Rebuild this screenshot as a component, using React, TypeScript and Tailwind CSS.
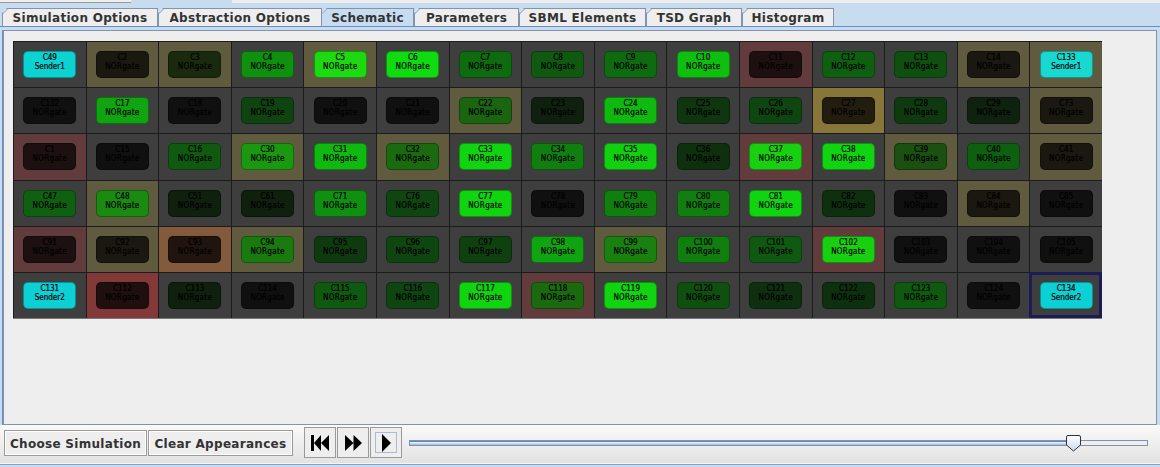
const font = "font-['DejaVu_Sans',sans-serif]";

const GREY = "bg-[#3e3e3e]";
const OLIVE = "bg-[#605a3e]";
const ROSE = "bg-[#623c3c]";
const GOLD = "bg-[#877539]";
const ORANGE = "bg-[#835a3b]";
const RED = "bg-[#843939]";

type Cell = [string, string, string, string?, string?];

const rows: Cell[][] = [
  [
    ["C49", "bg-[#0dd2d2]", GREY, "Sender1"],
    ["C2", "bg-[#1b1810]", OLIVE],
    ["C3", "bg-[#1a2a0e]", OLIVE],
    ["C4", "bg-[#10900f]", GREY],
    ["C5", "bg-[#1cd911]", OLIVE],
    ["C6", "bg-[#10da10]", GREY],
    ["C7", "bg-[#0f6b10]", GREY],
    ["C8", "bg-[#0f5a10]", GREY],
    ["C9", "bg-[#0f6b10]", GREY],
    ["C10", "bg-[#0fbf10]", GREY],
    ["C11", "bg-[#1e1010]", ROSE],
    ["C12", "bg-[#0f5f10]", GREY],
    ["C13", "bg-[#0f4f10]", GREY],
    ["C14", "bg-[#1a1810]", OLIVE],
    ["C133", "bg-[#18d8d0]", OLIVE, "Sender1"],
  ],
  [
    ["C132", "bg-[#101010]", GREY],
    ["C17", "bg-[#10a410]", GREY],
    ["C18", "bg-[#101010]", GREY],
    ["C19", "bg-[#0f4310]", GREY],
    ["C20", "bg-[#101010]", GREY],
    ["C21", "bg-[#101010]", GREY],
    ["C22", "bg-[#1b6410]", OLIVE],
    ["C23", "bg-[#0f200f]", GREY],
    ["C24", "bg-[#10b910]", GREY],
    ["C25", "bg-[#0f360f]", GREY],
    ["C26", "bg-[#0f4510]", GREY],
    ["C27", "bg-[#231d10]", GOLD],
    ["C28", "bg-[#0f3a10]", GREY],
    ["C29", "bg-[#0f220f]", GREY],
    ["C73", "bg-[#1a1810]", OLIVE],
  ],
  [
    ["C1", "bg-[#1c1010]", ROSE],
    ["C15", "bg-[#101010]", GREY],
    ["C16", "bg-[#0f5a10]", GREY],
    ["C30", "bg-[#1a9910]", OLIVE],
    ["C31", "bg-[#10b910]", GREY],
    ["C32", "bg-[#1b6a10]", OLIVE],
    ["C33", "bg-[#10d410]", GREY],
    ["C34", "bg-[#107f10]", GREY],
    ["C35", "bg-[#10d010]", GREY],
    ["C36", "bg-[#0f300f]", GREY],
    ["C37", "bg-[#18d010]", ROSE],
    ["C38", "bg-[#10d410]", GREY],
    ["C39", "bg-[#1b5010]", OLIVE],
    ["C40", "bg-[#0f5f10]", GREY],
    ["C41", "bg-[#1a1810]", OLIVE],
  ],
  [
    ["C47", "bg-[#0f6010]", GREY],
    ["C48", "bg-[#1a8a10]", OLIVE],
    ["C51", "bg-[#0f200f]", GREY],
    ["C61", "bg-[#0f200f]", GREY],
    ["C71", "bg-[#109010]", GREY],
    ["C76", "bg-[#0f4510]", GREY],
    ["C77", "bg-[#10d410]", GREY],
    ["C78", "bg-[#101010]", GREY],
    ["C79", "bg-[#107f10]", GREY],
    ["C80", "bg-[#107f10]", GREY],
    ["C81", "bg-[#10d410]", GREY],
    ["C82", "bg-[#0f300f]", GREY],
    ["C83", "bg-[#101010]", GREY],
    ["C84", "bg-[#1a1810]", OLIVE],
    ["C85", "bg-[#101010]", GREY],
  ],
  [
    ["C91", "bg-[#1c1010]", ROSE],
    ["C92", "bg-[#1a1810]", OLIVE],
    ["C93", "bg-[#20150e]", ORANGE],
    ["C94", "bg-[#1a7a10]", OLIVE],
    ["C95", "bg-[#0f3a10]", GREY],
    ["C96", "bg-[#0f4510]", GREY],
    ["C97", "bg-[#0f4010]", GREY],
    ["C98", "bg-[#10a410]", GREY],
    ["C99", "bg-[#1a8010]", OLIVE],
    ["C100", "bg-[#107f10]", GREY],
    ["C101", "bg-[#0f5a10]", GREY],
    ["C102", "bg-[#18d010]", ROSE],
    ["C103", "bg-[#101010]", GREY],
    ["C104", "bg-[#101010]", GREY],
    ["C105", "bg-[#101010]", GREY],
  ],
  [
    ["C131", "bg-[#0dd0d4]", GREY, "Sender2"],
    ["C112", "bg-[#200f0f]", RED],
    ["C113", "bg-[#0f200f]", GREY],
    ["C114", "bg-[#101010]", GREY],
    ["C115", "bg-[#0f5a10]", GREY],
    ["C116", "bg-[#0f4510]", GREY],
    ["C117", "bg-[#10d410]", GREY],
    ["C118", "bg-[#1b6a10]", ROSE],
    ["C119", "bg-[#10d410]", GREY],
    ["C120", "bg-[#0f5010]", GREY],
    ["C121", "bg-[#0f300f]", GREY],
    ["C122", "bg-[#0f300f]", GREY],
    ["C123", "bg-[#0f5a10]", GREY],
    ["C124", "bg-[#101010]", GREY],
    ["C134", "bg-[#0dd0d4]", GREY, "Sender2", "outline"],
  ],
];

const tabs = [
  { label: "Simulation Options", w: "w-[156px]" },
  { label: "Abstraction Options", w: "w-[164px]" },
  { label: "Schematic", w: "w-[92px]", active: true },
  { label: "Parameters", w: "w-[105px]" },
  { label: "SBML Elements", w: "w-[127px]" },
  { label: "TSD Graph", w: "w-[96px]" },
  { label: "Histogram", w: "w-[92px]" },
];

function Tab({ label, w, active }: { label: string; w: string; active?: boolean }) {
  return (
    <div
      className={`relative ${w} h-[18px] flex items-center justify-center border-t border-r border-[#8094ad] text-[12px] leading-none font-bold tracking-[0.3px] text-[#333333] [clip-path:polygon(5px_0,100%_0,100%_100%,0_100%,0_5px)] ${
        active ? "bg-[#c8dcf0]" : "bg-[#eeeeee] border-l"
      }`}
    >
      <svg className="absolute left-[-1px] top-[-1px]" width="7" height="7" viewBox="0 0 7 7">
        <path d="M0.5 6 L6 0.5" stroke="#8094ad" strokeWidth="1" fill="none" />
      </svg>
      <span>{label}</span>
    </div>
  );
}

function Node({ cell }: { cell: Cell }) {
  const [id, color, bg, kind, outline] = cell;
  return (
    <div
      className={`${bg} flex items-center justify-center border-l border-t border-[#1c1c1c] min-w-0 ${
        outline ? "outline-3 -outline-offset-3 outline-[#1c1c54]" : ""
      }`}
    >
      <div
        className={`${color} w-[53px] h-[27px] rounded-[5px] border border-black/30 flex flex-col items-center justify-start pt-[1px] text-black font-['DejaVu_Sans_Condensed','DejaVu_Sans',sans-serif] text-[8px] leading-[9px] font-normal [-webkit-text-stroke:0.2px_#000]`}
      >
        <span>{id}</span>
        <span className={kind ? "" : "tracking-[0.3px]"}>{kind ?? "NORgate"}</span>
      </div>
    </div>
  );
}

function ActionButton({ children, w }: { children: string; w: string }) {
  return (
    <button className={`${w} h-[26px] pt-[2px] whitespace-nowrap bg-[#eeeeee] border border-[#9a9a9a] shadow-[inset_0_0_0_1px_#ffffff] text-[12px] font-bold tracking-[0.3px] text-[#333333] leading-none`}>
      {children}
    </button>
  );
}

function IconButton({ children, focused }: { children: React.ReactNode; focused?: boolean }) {
  return (
    <button className="w-[32px] h-[31px] bg-[#eeeeee] border border-[#9a9a9a] flex items-center justify-center">
      <span className={`w-[22px] h-[21px] flex items-center justify-center border ${focused ? "border-[#a8bcd8]" : "border-transparent"}`}>
        {children}
      </span>
    </button>
  );
}

export default function App() {
  return (
    <div className={`${font} w-[1160px] h-[467px] bg-[#c8dcf0] flex flex-col overflow-hidden`}>
      <div className="h-[3px] flex shrink-0">
        <div className="w-[131px] bg-[#eeeeee] border-b border-[#9a9a9a]" />
        <div className="w-[101px]" />
        <div className="flex-1 bg-[#eeeeee]" />
      </div>
      <div className="h-[23px] flex items-end pl-[2px] shrink-0">
        {tabs.map((t) => (
          <Tab key={t.label} {...t} />
        ))}
      </div>
      <div className="h-px bg-[#6a8cc8] shrink-0" />
      <div className="flex-1 flex flex-col min-h-0 border-x-[3px] border-[#c8dcf0] pt-[3px]">
        <div className="h-[395px] shrink-0 bg-[#eeeeee] border border-[#8094ad] pt-[10px] pl-[9px] shadow-[-1px_0_0_#6a8cc8]">
          <div className="w-[1089px] h-[278px] grid grid-cols-[repeat(15,1fr)] grid-rows-[repeat(6,1fr)] border-b border-[#777777]">
            {rows.flat().map((cell) => (
              <Node key={cell[0]} cell={cell} />
            ))}
          </div>
        </div>
        <div className="flex-1 flex items-start bg-linear-to-b from-[#fafafa] to-[#e2e2e2] -mx-[3px] pl-[4px] pt-[5px]">
          <div className="flex gap-px">
            <ActionButton w="w-[143px]">Choose Simulation</ActionButton>
            <ActionButton w="w-[145px]">Clear Appearances</ActionButton>
          </div>
          <div className="flex gap-px ml-[11px] -mt-[3px]">
            <IconButton>
              <svg width="18" height="16" viewBox="0 0 18 16">
                <path d="M0 0h3v16H0zM10 0v16L3 8zM18 0v16l-8-8z" fill="#000" />
              </svg>
            </IconButton>
            <IconButton>
              <svg width="17" height="16" viewBox="0 0 17 16">
                <path d="M0 0l8.5 8L0 16zM8.5 0L17 8l-8.5 8z" fill="#000" />
              </svg>
            </IconButton>
            <IconButton focused>
              <svg width="9" height="18" viewBox="0 0 9 18">
                <path d="M0 0l9 9-9 9z" fill="#000" />
              </svg>
            </IconButton>
          </div>
          <div className="relative w-[739px] h-[6px] ml-[7px] mt-[10px] flex border border-[#7f93ad] bg-[#eeeeee]">
            <div className="w-[664px] h-full bg-linear-to-b from-[#f4f8fc] to-[#9fbbdc] border-t border-[#5f83c4]" />
            <svg className="absolute left-[656px] top-[-6px]" width="16" height="17" viewBox="0 0 16 17">
              <defs>
                <linearGradient id="thumb" x1="0" y1="0" x2="0" y2="1">
                  <stop offset="0" stopColor="#ffffff" />
                  <stop offset="1" stopColor="#c8dcf0" />
                </linearGradient>
              </defs>
              <path d="M.5 2 Q.5 .5 2 .5 H13 Q14.5 .5 14.5 2 V10 L7.5 16 L.5 10 Z" fill="url(#thumb)" stroke="#333" strokeWidth="1" />
            </svg>
          </div>
        </div>
      </div>
      <div className="h-[1px] bg-[#f4f4f4] shrink-0" />
      <div className="h-[3px] border-t border-[#7f9fcf] shrink-0" />
    </div>
  );
}
